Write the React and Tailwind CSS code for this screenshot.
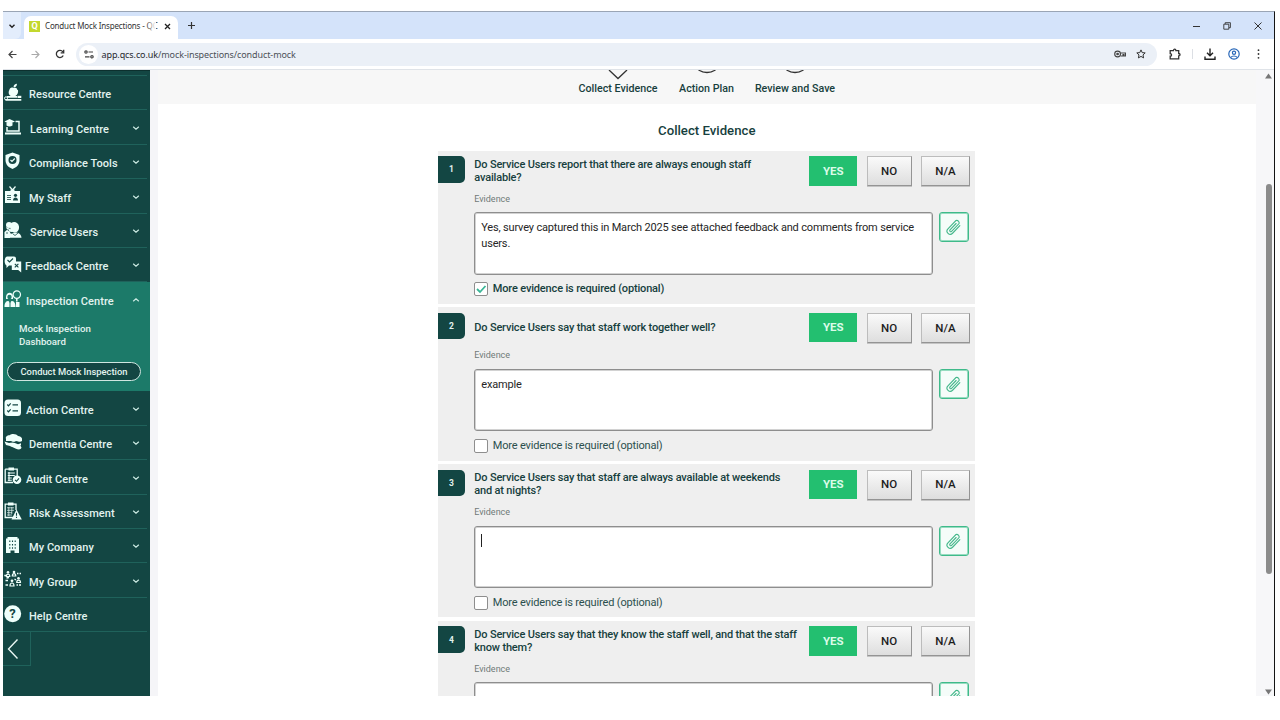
import React from "react";

const W = "#effffb";
const D = "#134643";

function NavIcon({ name }) {
  const shapes = {
    resource: (
      <>
        <path d="M6 5.5C8 3.5 9.500 5 10 5c.8-.5 3.500-1 3.500 3 0 3-2 5-3.500 5H7.500C5 12 4.500 7.500 6 5.500Z" fill={W} />
        <path d="M9.500 4.500C9.500 2 11 .8 13 .8 13 3 11.500 4.500 9.500 4.500Z" fill={W} />
        <path d="M5 7.500c-1 2.500 0 5 2 5.500h4c2.500-1 3.500-4 3-6" fill={W} />
        <path d="M3 13.900h10M1.500 16.900h15.800" stroke={W} strokeWidth="1.700" fill="none" />
        <path d="M13.500 12.800h3.800v2.200h-3.800Z" fill={W} />
        <circle cx="2" cy="15.300" r="1.500" stroke={W} strokeWidth="1" fill="none" />
      </>
    ),
    learning: (
      <>
        <path d="M.5 3.500 5.500 1l5.500 2.500L5.500 6Z" fill={W} />
        <path d="M2.500 5v2.500c2 1.300 4 1.300 6 0V5" fill={W} />
        <path d="M11.500 3.500H15v9.500H3V9" stroke={W} strokeWidth="1.500" fill="none" />
        <path d="M1 14.500h16v2H1Z" fill={W} />
      </>
    ),
    compliance: (
      <>
        <path d="M8.500.5 15.500 3v5c0 4.500-3 7.500-7 9-4-1.500-7-4.500-7-9V3Z" fill={W} />
        <circle cx="8.500" cy="8" r="4" fill={D} />
        <path d="m6.500 8 1.500 1.500 2.800-3" stroke={W} strokeWidth="1.200" fill="none" />
      </>
    ),
    staff: (
      <>
        <path d="M5.500.5 8.500 4 11.500.5" stroke={W} strokeWidth="1.200" fill="none" />
        <path d="M1 5h5.500V3.500h4V5H16v12H1Z" fill={W} />
        <path d="M3 9.500h4M3 11.500h4M3 13.500h4" stroke={D} strokeWidth=".8" />
        <circle cx="11.500" cy="9.300" r="1.600" fill={D} />
        <path d="M9 14.500c0-4 5-4 5 0Z" fill={D} />
      </>
    ),
    users: (
      <>
        <circle cx="5" cy="4" r="3" fill={W} />
        <path d="M6 3.500c1.500-4 8.500-3.500 9 2 .3 3-1 6-4 6S6 8.500 6 5Z" fill={W} />
        <path d="M2 6c1 3 2 4 5 5l5-.5M.5 11 4 8l3 5-1 4H.5ZM5 16.800c1-7 12-7 12.500 0Z" fill={W} />
        <path d="m8.500 12.500 2.500 2 3-2.500M3 11v2" stroke={D} strokeWidth=".8" fill="none" />
      </>
    ),
    feedback: (
      <>
        <path d="M3 1.500h7a2 2 0 0 1 2 2v7H5L2.500 13V10.500C0 9 0 2.500 3 1.500Z" fill={W} />
        <path d="M7.800 6.500h9.400V17.500l-3-2.500H7.800Z" fill={W} />
        <path d="m3.500 5 2 2 3.500-3.500M10.800 8.800l3.600 3.600m0-3.600-3.600 3.600" stroke={D} strokeWidth="1.100" fill="none" />
      </>
    ),
    inspection: (
      <>
        <circle cx="12.800" cy="4.600" r="3.700" stroke={W} strokeWidth="1.200" fill="none" />
        <path d="M12.800 8.500v3" stroke={W} strokeWidth="1.500" />
        <path d="M2 7c0-5 7-6 7 0v2H2Z" fill={W} />
        <circle cx="5.500" cy="7" r="2.200" fill="#1c7a69" />
        <path d="M.5 17c0-5 2-6 4-6l1.500 2 1.500-2c2 0 4 1 4 6ZM12 12h3.500v5H12Z" fill={W} />
        <path d="M6 12v5" stroke="#1c7a69" strokeWidth="1" />
      </>
    ),
    action: (
      <>
        <rect x=".5" y=".5" width="16.500" height="16.500" rx="3.500" fill={W} />
        <path d="m3.300 5.500 1.200 1.300 2.200-2.500m-3.400 7.200 1.200 1.300 2.200-2.500M8.500 5.800H14m-5.500 6H14" stroke={D} strokeWidth="1.200" fill="none" />
      </>
    ),
    dementia: (
      <>
        <path d="M2 6C1 3 4 2.500 6 2c2-2 7-1 8 1 3 0 5 3 4 5-1 1-4 1-6 0-2 2-5 .5-5 0H2Z" fill={W} />
        <path d="M.5 8.500 5 10l4-.8 5 2 3-1v2l-4 1.500-3 .3-8-2Z" fill={W} />
        <path d="M6 13c5-1 8-.5 10-1l1.500 2.500c-1 3-4 1.800-5.500 1.200Z" fill={W} />
        <path d="M3 8.500c4-.5 7 2 11 .5" stroke={D} strokeWidth=".7" fill="none" />
      </>
    ),
    audit: (
      <>
        <path d="M1.200 2.200h12V9M1.200 2.200v13.300H9" stroke={W} strokeWidth="1.300" fill="none" />
        <path d="M4.500.5h5.500v3H4.500Z" fill={W} />
        <path d="M3.800 6h7m-7 2.500h7M3.800 11h4m-4 2.300h4M5 5v9" stroke={W} strokeWidth="1.100" />
        <circle cx="13" cy="12.800" r="4.300" fill={W} />
        <path d="m11 12.800 1.500 1.500 2.500-3" stroke={D} strokeWidth="1.100" fill="none" />
      </>
    ),
    risk: (
      <>
        <path d="M10 15.500H1.200V2.200H12V8" stroke={W} strokeWidth="1.300" fill="none" />
        <path d="M4 .5h5.500v3H4Z" fill={W} />
        <path d="M3 5.800h7m-7 2.500h7m-7 2.400h5M3 13h5M4.800 5v9M7.800 5v7" stroke={W} strokeWidth=".7" />
        <path d="M12.500 7.500 17.800 17.500H7.500Z" fill={W} />
        <path d="M12.500 10.800v3m0 1v1.200" stroke={D} strokeWidth="1.100" />
      </>
    ),
    company: (
      <>
        <path d="M3.500 1h10v1.500H15V17h-4.500v-2.500h-4V17H2V2.500h1.500Z" fill={W} />
        <path d="M5.800 4.500v8.500M8.500 4.500v8.500M11.200 4.500v8.500" stroke={D} strokeWidth="1.100" strokeDasharray="1.500 1.900" />
      </>
    ),
    group: (
      <>
        <g fill={W}>
          <circle cx="4" cy="2.200" r="1.300" /><circle cx="10" cy="2" r="1.300" /><circle cx="14.500" cy="8.200" r="1.300" /><circle cx="8" cy="10.800" r="1.400" />
        </g>
        <path d="M2.300 6.500c0-3.200 3.500-3.200 3.500 0Zm6-.5c0-3.200 3.500-3.200 3.500 0Zm4.400 6.500c0-3.200 3.800-3.200 3.800 0ZM6 16c0-4 4-4 4 0Z" stroke={W} strokeWidth="1.200" fill="none" />
        <path d="M.3 5.500H2m11-2h1.500m1 0H17M1.500 10.500l2.500 0m-1.500-2.500 2.500-.500m5.500 1.500 1.500 1M1.500 15h2.500m8.500 0h1.500m1 0H17" stroke={W} strokeWidth="1.300" />
      </>
    ),
    help: <circle cx="8.700" cy="8.700" r="8.500" fill={W} />,
  };
  return (
    <span className="relative flex h-[18px] w-[18px] shrink-0 items-center justify-center">
      <svg className="h-[18px] w-[18px]" viewBox="0 0 18 18">{shapes[name]}</svg>
      {name === "help" && (
        <span className="absolute inset-0 pr-px text-center text-[13px] leading-[17px] font-bold text-[#134643]">?</span>
      )}
    </span>
  );
}

function Chevron({ up }) {
  return (
    <svg className="absolute top-[13.500px] right-[10px] h-2 w-2" viewBox="0 0 8 8" fill="none" stroke="#cdebe4" strokeWidth="1.200">
      <path d={up ? "M1.200 5.300 4 2.900l2.800 2.400" : "M1.200 2.700 4 5.100l2.800-2.400"} />
    </svg>
  );
}

function NavRow({ icon, label, x, open, plain }) {
  return (
    <div className="relative flex h-[34.400px] shrink-0 items-center pl-[1px]">
      {!open && <div className="absolute right-[3px] bottom-0 left-0 h-px bg-[#1f625b]" />}
      <div className="-mt-[2px] flex"><NavIcon name={icon} /></div>
      <span className={`${x} mt-[4.400px] text-[11px] leading-[16px] font-medium tracking-[0.050px] whitespace-nowrap text-[#e2f3ef]`}>{label}</span>
      {!plain && <Chevron up={open} />}
    </div>
  );
}

function Sidebar() {
  return (
    <nav className="relative flex w-[147px] shrink-0 flex-col overflow-hidden border-t border-[#0c302e] bg-[#134643]">
      <div className="mr-[3px] h-[5px] shrink-0 border-b border-[#1f625b]" />
      <NavRow icon="resource" label="Resource Centre" x="ml-[7px]" plain />
      <NavRow icon="learning" label="Learning Centre" x="ml-[8px]" />
      <NavRow icon="compliance" label="Compliance Tools" x="ml-[7px]" />
      <NavRow icon="staff" label="My Staff" x="ml-[7px]" />
      <NavRow icon="users" label="Service Users" x="ml-[8px]" />
      <NavRow icon="feedback" label="Feedback Centre" x="ml-[3px]" />
      <div className="h-[109px] shrink-0 bg-[#1c7a69]">
        <NavRow icon="inspection" label="Inspection Centre" x="ml-[4px]" open />
        <div className="mt-[5px] ml-[16px] text-[9.700px] leading-[13.500px] font-medium text-[#e2f3ef]">
          Mock Inspection<br />Dashboard
        </div>
        <div className="mt-[13.400px] ml-[4px] flex h-[19px] w-[134px] items-center justify-center rounded-full border border-[#cfe6e0] bg-[#134643] text-[9.400px] font-medium whitespace-nowrap text-[#e2f3ef]">
          Conduct Mock Inspection
        </div>
      </div>
      <NavRow icon="action" label="Action Centre" x="ml-[4px]" />
      <NavRow icon="dementia" label="Dementia Centre" x="ml-[7px]" />
      <NavRow icon="audit" label="Audit Centre" x="ml-[4px]" />
      <NavRow icon="risk" label="Risk Assessment" x="ml-[7px]" />
      <NavRow icon="company" label="My Company" x="ml-[7px]" />
      <NavRow icon="group" label="My Group" x="ml-[7px]" />
      <NavRow icon="help" label="Help Centre" x="ml-[7px]" plain />
      <div className="h-[34px] w-[28px] shrink-0 border-r border-b border-[#1f625b] pt-[6px] pl-[4px]">
        <svg className="h-[22px] w-3" viewBox="0 0 12 22" fill="none" stroke="#e9f6f3" strokeWidth="1.400"><path d="M10.500 1.500 1.500 11l9 9.500" /></svg>
      </div>
    </nav>
  );
}

function Clip() {
  return (
    <svg className="h-[20px] w-[20px]" viewBox="-10 -10 20 20" fill="none" stroke="#43b78a" strokeWidth="1.100" strokeLinecap="round">
      <path transform="rotate(44)" d="M3.300-5V5.500a3.200 3.200 0 0 1-6.400 0V-6a2.500 2.500 0 0 1 4.400 0V4.800a1.100 1.100 0 0 1-2.200 0V-4" />
    </svg>
  );
}

function Answer({ label, w }) {
  return (
    <div className={`${w} flex h-[30px] items-center justify-center border border-[#bcbcbc] border-r-[#949494] border-b-[#949494] bg-linear-to-b from-[#fafafa] to-[#dedede] pt-px text-[11.500px] font-medium text-[#1d1d1d] shadow-[0_1px_0_#c4c4c4]`}>
      {label}
    </div>
  );
}

function Question({ n, lines, value, checked, caret, last }) {
  return (
    <section className="relative h-[153.300px] w-[537px] shrink-0 bg-[#efefef]">
      <div className="flex h-[42px] pt-[5.500px]">
        <div className="flex h-[26.500px] w-[26.500px] items-center justify-center rounded-r-[5px] bg-[#134643] pt-px text-[8.500px] font-bold text-[#e3f3ef]">{n}</div>
        <div className="ml-[9.500px] flex h-[29px] w-[335px] items-center">
          <h3 className="text-[11px] leading-[13px] font-medium tracking-[-0.170px] whitespace-nowrap text-[#173f3e]">
            {lines.map((l) => <span className="block" key={l}>{l}</span>)}
          </h3>
        </div>
        <div className="flex">
          <div className="mr-[9.400px] flex h-[29.500px] w-[48px] items-center justify-center bg-[#23bf70] pt-px text-[11.500px] font-bold text-[#dcfbe9]">YES</div>
          <Answer label="NO" w="mr-[9px] w-[45px]" />
          <Answer label="N/A" w="w-[49.500px]" />
        </div>
      </div>
      <div className="ml-[36px] text-[9px] leading-[12px] text-[#6f7a78]">Evidence</div>
      <div className="mt-[7.500px] ml-[36px] flex">
        <div className="h-[62.500px] w-[459px] rounded-[3px] border border-[#8e8e8e] bg-white px-[6px] pt-[6.800px] text-[11px] leading-[16px] tracking-[-0.170px] whitespace-pre text-[#262626] shadow-[inset_0_0_0_1px_#d2d2d2]">
          {caret ? <div className="mt-px h-[13px] w-px bg-[#222]" /> : value}
        </div>
        <div className="ml-[6px] flex h-[30px] w-[30px] items-center justify-center rounded-[3px] border border-[#3fba8a] bg-[#f5fcf9] shadow-[inset_0_0_0_1px_#96dcc0]"><Clip /></div>
      </div>
      {!last && (
        <div className="mt-[7.500px] ml-[36px] flex h-[14px] items-center">
          <div className="h-[14px] w-[14px] rounded-[2px] border border-[#8e8e8e] bg-white">
            {checked && <svg className="h-3 w-3" viewBox="0 0 12 12" fill="none" stroke="#39b596" strokeWidth="1.800"><path d="m2 6 3 3 5.500-6" /></svg>}
          </div>
          <span className={`mt-px ml-[4.500px] text-[11px] tracking-[-0.160px] whitespace-nowrap ${checked ? "font-medium text-[#173f3e]" : "text-[#2c4f4e]"}`}>More evidence is required (optional)</span>
        </div>
      )}
    </section>
  );
}

function Browser() {
  return (
    <header className="shrink-0">
      <div className="flex h-[27px] bg-[#d4e3fa]">
        <div className="flex w-[18px] items-center justify-center rounded-br-[6px] bg-[#e3edfc]">
          <svg className="h-2 w-2" viewBox="0 0 8 8" fill="none" stroke="#222" strokeWidth="1.400"><path d="M1.500 2.700 4 5.200l2.500-2.500" /></svg>
        </div>
        <div className="mt-[4px] ml-[3px] flex h-[23px] w-[154px] items-center rounded-t-[7px] bg-white pb-[3px] pl-[5px]">
          <div className="flex h-[11px] w-[11px] items-center justify-center bg-[#c3d82e] text-[9px] leading-none font-bold text-white">Q</div>
          <div className="relative ml-[5px] w-[111px] font-['Noto_Sans'] text-[8px] leading-[14px] tracking-[-0.160px] whitespace-nowrap text-[#333]">
            Conduct Mock Inspections - QC
            <div className="absolute inset-y-0 right-0 w-2.5 bg-linear-to-r from-transparent to-white" />
          </div>
          <svg className="ml-[8px] h-[7px] w-[7px]" viewBox="0 0 7 7" stroke="#222" strokeWidth="1.300"><path d="m1 1 5 5M6 1 1 6" /></svg>
        </div>
        <svg className="mt-[9px] ml-[9px] h-[9px] w-[9px]" viewBox="0 0 9 9" stroke="#333" strokeWidth="1.200"><path d="M4.500 1v7M1 4.500h7" /></svg>
        <div className="ml-auto flex h-[27px] items-center gap-[23px] pr-[12px]">
          <svg className="h-2 w-[7px]" viewBox="0 0 7 8" stroke="#333"><path d="M0 4.500h7" /></svg>
          <svg className="h-[8px] w-[8px]" viewBox="0 0 8 8" fill="none" stroke="#333"><path d="M.8 2.200h5v5h-5ZM2.200 2V.7h5.200v5H6" strokeWidth=".9" /></svg>
          <svg className="h-[8px] w-[8px]" viewBox="0 0 8 8" stroke="#333"><path d="m.5.5 7 7m0-7-7 7" /></svg>
        </div>
      </div>
      <div className="flex h-[31px] items-center border-b border-[#dfe3e8] bg-white pl-[5px]">
        <svg className="h-[9px] w-[9px]" viewBox="0 0 9 9" fill="none" stroke="#444" strokeWidth="1.200"><path d="M8.500 4.500H1M4.500 1 1 4.500 4.500 8" /></svg>
        <svg className="ml-[14px] h-[9px] w-[9px]" viewBox="0 0 9 9" fill="none" stroke="#aaa" strokeWidth="1.100"><path d="M.5 4.500H8M4.500 1 8 4.500 4.500 8" /></svg>
        <svg className="ml-[15px] h-[10px] w-[10px]" viewBox="0 0 10 10" fill="none" stroke="#333" strokeWidth="1.300"><path d="M8.200 6.500A3.600 3.600 0 1 1 7.800 2.700L8.500 3.500" /><path d="M8.700.8v3H5.700" /></svg>
        <div className="ml-[11px] flex h-[23px] w-[1081px] items-center rounded-full bg-[#ebf0f7] pl-[3px]">
          <div className="flex h-[19px] w-[19px] items-center justify-center rounded-full bg-white">
            <svg className="h-[9px] w-[10px]" viewBox="0 0 10 9" fill="none" stroke="#444" strokeWidth="1.200"><circle cx="2" cy="2" r="1.200" /><path d="M4.500 2H9M1 6.800h4.500" /><circle cx="8" cy="6.800" r="1.200" /></svg>
          </div>
          <span className="mt-px ml-[3.500px] font-['Noto_Sans'] text-[9px] leading-[14px] tracking-[-0.090px] whitespace-nowrap text-[#4c5157]"><span className="text-[#26292d]">app.qcs.co.uk</span>/mock-inspections/conduct-mock</span>
          <svg className="mr-[10px] ml-auto h-[8px] w-[12px]" viewBox="0 0 12 8" fill="none" stroke="#444" strokeWidth="1.100"><circle cx="3.600" cy="4" r="2.900" /><circle cx="3.600" cy="4" r=".8" fill="#444" /><path d="M6.500 3h5v3H10V4.500H9V6H6.500" /></svg>
          <svg className="mr-[11px] h-[10px] w-[10px]" viewBox="0 0 10 10" fill="none" stroke="#333" strokeWidth="1"><path d="m5 .9 1.200 2.700 3 .3L7 5.900l.6 3L5 7.400 2.400 8.900l.6-3L.8 3.900l3-.3Z" /></svg>
        </div>
        <svg className="ml-[12px] h-[12px] w-[12px]" viewBox="0 0 12 12" fill="none" stroke="#333" strokeWidth="1.300"><path d="M1.200 2.700h3.200c0-2 2.500-2 2.500 0h2.800v2.800c1.800 0 1.800 2.300 0 2.300v3H1.200V8.200c1.800 0 1.800-2.500 0-2.500Z" /></svg>
        <div className="ml-[11px] h-[10px] w-px bg-[#dcdfe4]" />
        <svg className="ml-[11px] h-[12px] w-[12px]" viewBox="0 0 12 12" fill="none" stroke="#222" strokeWidth="1.400"><path d="M6 .5v7M3 4.800l3 3 3-3M1 8.500v2.700h10V8.500" /></svg>
        <svg className="ml-[12px] h-[12px] w-[12px]" viewBox="0 0 12 12" fill="none" stroke="#2867b8" strokeWidth="1.200"><circle cx="6" cy="6" r="5.200" /><circle cx="6" cy="4.700" r="1.600" /><path d="M2.700 9.500c1.500-2 5-2 6.600 0" /></svg>
        <svg className="ml-[16.500px] h-[10px] w-[3px]" viewBox="0 0 3 10" fill="#333"><circle cx="1.500" cy="1.200" r=".9" /><circle cx="1.500" cy="5" r=".9" /><circle cx="1.500" cy="8.800" r=".9" /></svg>
      </div>
    </header>
  );
}

export default function App() {
  return (
    <div className="h-[720px] w-[1280px] overflow-hidden bg-white pt-[11px] pl-[3px] font-[Roboto,sans-serif]">
      <div className="flex h-[685px] w-[1271.500px] flex-col overflow-hidden border-t border-r-[1.500px] border-t-[#9aa5b5] border-r-[#141414]">
        <Browser />
        <div className="flex min-h-0 flex-1">
          <Sidebar />
          <div className="w-[8px] shrink-0 bg-[#f5f5f8]" />
          <main className="flex min-w-0 flex-1 flex-col items-center overflow-hidden bg-white">
            <div className="flex h-[34px] w-full shrink-0 bg-[#f7f7f7] text-[10.700px] leading-[15px] font-medium whitespace-nowrap text-[#173f3e]">
              <div className="ml-[409px] flex w-[102px] flex-col items-center">
                <svg className="h-[11px] w-[20px] shrink-0" viewBox="0 0 20 11" fill="none" stroke="#333" strokeWidth="1.300"><path d="m1 0 9 8.500L19 0" /></svg>
                Collect Evidence
              </div>
              <div className="flex w-[75px] flex-col items-center">
                <svg className="h-[11px] w-[20px] shrink-0" viewBox="0 0 20 11" fill="none" stroke="#333" strokeWidth="1.300"><path d="M1.500 0Q10 5 18.500 0" /></svg>
                Action Plan
              </div>
              <div className="flex w-[102px] flex-col items-center">
                <svg className="h-[11px] w-[20px] shrink-0" viewBox="0 0 20 11" fill="none" stroke="#333" strokeWidth="1.300"><path d="M1.500 0Q10 5 18.500 0" /></svg>
                Review and Save
              </div>
            </div>
            <h2 className="mt-[18px] h-[28.500px] shrink-0 text-[13.200px] leading-[17px] font-medium text-[#173f3e]">Collect Evidence</h2>
            <div className="flex w-[537px] shrink-0 flex-col gap-[3.500px]">
              <Question n="1" lines={["Do Service Users report that there are always enough staff", "available?"]} value={"Yes, survey captured this in March 2025 see attached feedback and comments from service\nusers."} checked />
              <Question n="2" lines={["Do Service Users say that staff work together well?"]} value="example" />
              <Question n="3" lines={["Do Service Users say that staff are always available at weekends", "and at nights?"]} caret />
              <Question n="4" lines={["Do Service Users say that they know the staff well, and that the staff", "know them?"]} value="" last />
            </div>
          </main>
          <div className="flex w-[18px] shrink-0 flex-col items-end bg-[#f7f7f9] pr-[2px]">
            <svg className="mt-[3px] h-[6px] w-[7px]" viewBox="0 0 7 6" fill="#777"><path d="M3.500.5 7 5.500H0Z" /></svg>
            <div className="mt-[105px] h-[390px] w-[6px] rounded-full bg-[#8b8b8b]" />
            <svg className="mt-auto mb-px h-[6px] w-[7px]" viewBox="0 0 7 6" fill="#777"><path d="M0 .5h7L3.500 5.500Z" /></svg>
          </div>
        </div>
      </div>
    </div>
  );
}
